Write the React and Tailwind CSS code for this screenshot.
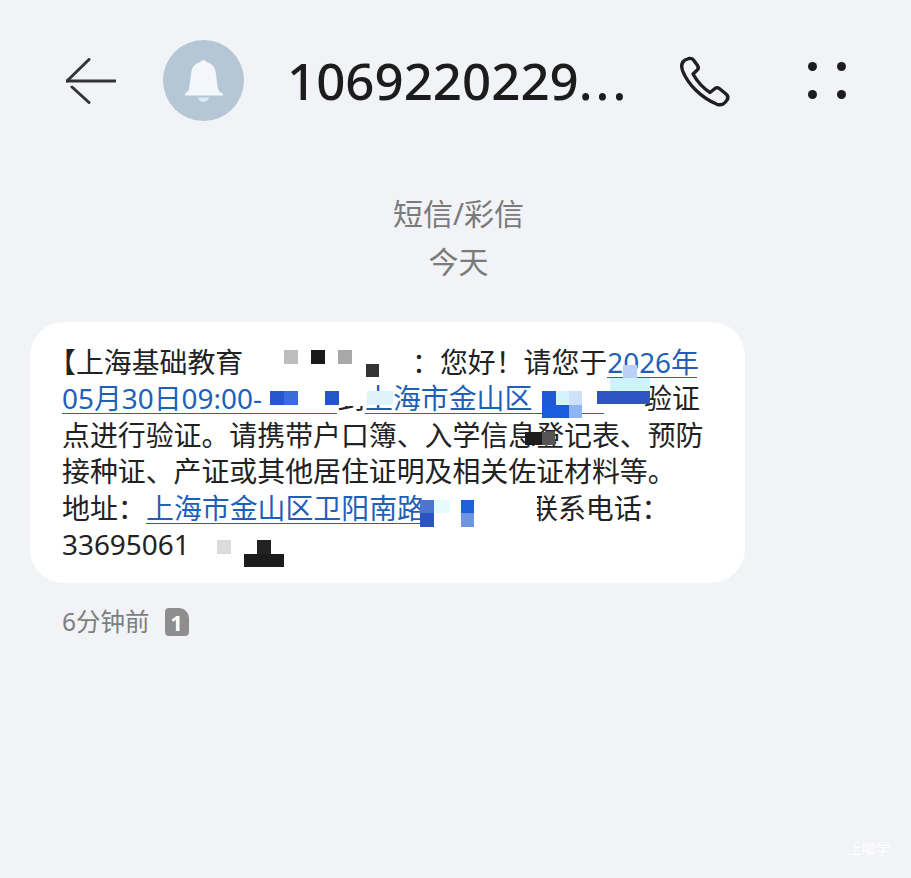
// mosaic squares over the censored parts of the message, placed relative to the bubble
const MOSAIC = [
    "left-[254px] top-[28px] w-[14px] h-[14px] bg-[#bdbdbd]",
    "left-[281px] top-[28px] w-[14px] h-[14px] bg-[#1a1a1a]",
    "left-[308px] top-[28px] w-[14px] h-[14px] bg-[#a8a8a8]",
    "left-[336px] top-[42px] w-[13px] h-[13px] bg-[#333333]",
    "left-[308px] top-[58px] w-[28px] h-[26px] bg-white",
    "left-[240px] top-[69px] w-[14px] h-[14px] bg-[#2757cf]",
    "left-[254px] top-[69px] w-[14px] h-[14px] bg-[#3a6cdb]",
    "left-[295px] top-[69px] w-[14px] h-[14px] bg-[#2456c8]",
    "left-[337px] top-[69px] w-[26px] h-[14px] bg-[#e0f3fb]",
    "left-[512px] top-[69px] w-[14px] h-[14px] bg-[#1f5ad6]",
    "left-[512px] top-[83px] w-[27px] h-[13px] bg-[#1a5ce0]",
    "left-[539px] top-[83px] w-[13px] h-[13px] bg-[#8fb4f5]",
    "left-[539px] top-[69px] w-[13px] h-[14px] bg-[#cfe0fa]",
    "left-[526px] top-[69px] w-[13px] h-[14px] bg-[#d5f3fb]",
    "left-[567px] top-[69px] w-[53px] h-[13px] bg-[#2f55c4]",
    "left-[580px] top-[56px] w-[40px] h-[13px] bg-[#cdf3fb]",
    "left-[593px] top-[43px] w-[14px] h-[13px] bg-[#bcd0f5]",
    "left-[495px] top-[110px] w-[17px] h-[13px] bg-[#1c1c1c]",
    "left-[512px] top-[110px] w-[13px] h-[13px] bg-[#555555]",
    "left-[390px] top-[191px] w-[14px] h-[14px] bg-[#2a55c0]",
    "left-[390px] top-[178px] w-[14px] h-[13px] bg-[#4f74cf]",
    "left-[431px] top-[178px] w-[13px] h-[13px] bg-[#1f5fd8]",
    "left-[431px] top-[191px] w-[13px] h-[14px] bg-[#6f94e0]",
    "left-[404px] top-[178px] w-[16px] h-[13px] bg-[#e6fbfe]",
    "left-[500px] top-[172px] w-[7px] h-[34px] bg-white",
    "left-[187px] top-[218px] w-[14px] h-[14px] bg-[#dcdcdc]",
    "left-[227px] top-[218px] w-[14px] h-[14px] bg-[#222222]",
    "left-[214px] top-[232px] w-[40px] h-[13px] bg-[#1c1c1c]",
];

function MessageLink({ className, children }) {
    return <span className={`inline-block h-[34px] border-b-[1.5px] border-[#2a62b4] text-[#1f5fb8] ${className}`}>{children}</span>;
}

function Line({ children }) {
    return <div className="flex h-[36.4px] items-start whitespace-nowrap leading-[36.4px]">{children}</div>;
}

export default function App() {
    return (
        <div className="relative h-[878px] w-[911px] overflow-hidden bg-[#f1f3f6] font-['Noto_Sans','Noto_Sans_CJK_SC',sans-serif] text-[#222222]">
            <header className="flex h-[121px] items-end pl-[66px] pt-[40px]">
                <div className="flex h-[81px] w-[97px] items-center">
                    <svg width="50" height="46" viewBox="0 0 50 46" fill="none" stroke="#333333" strokeWidth="3" strokeLinecap="round">
                        <path d="M1 23H49" />
                        <path d="M1 23L23 1.5" />
                        <path d="M6 29L23 44.5" />
                    </svg>
                </div>
                <div className="flex h-[81px] w-[81px] items-center justify-center rounded-full bg-[#b5c6d5]">
                    <svg width="40" height="44" viewBox="0 0 40 44">
                        <path d="M1 34.5C4 33 5 31 5.5 27L7.5 12C8.500 6.500 13 4 16.500 3C17.500 .5 21.500 .5 22.500 3C26 4 30.500 6.500 31.500 12L33.500 27C34 31 35 33 39 34.500V36.500H1Z" fill="#f3f7fb" />
                        <path d="M14 38.500H25C24 42 21.500 43 19.500 43C17.500 43 15 42 14 38.500Z" fill="#dfe8ef" />
                    </svg>
                </div>
                <div className="ml-[43px] flex h-[81px] w-[393px] items-center text-[51px] font-medium text-[#1c1c1c]">
                    1069220229<span className="tracking-[3px]">...</span>
                </div>
                <div className="flex h-[81px] w-[128px] items-center">
                    <svg width="50" height="50" viewBox="0 0 50 50" fill="none" stroke="#1f1f1f" strokeWidth="3.4" strokeLinejoin="round" className="overflow-visible">
                        <path d="M9 2.500C11 2 12.500 2.800 13.500 4L17.500 9.500C18.500 11 18.500 13 17 14.300L13 18C17 25 23 32 30 36.500L35 32.500C36.300 31.500 38 31.500 39.300 32.500L46 38C47.800 39.500 48.300 42 47 44L45 46.500C43 48.800 40 49.300 37 48.300C22 42 8 29 2.500 14.500C1 10 2 6 5 4Z" />
                    </svg>
                </div>
                <div className="grid h-[81px] w-[38px] grid-cols-2 content-center justify-between gap-y-[19px]">
                    <span className="h-[9px] w-[9px] rounded-full bg-[#1c1c1c]" />
                    <span className="h-[9px] w-[9px] justify-self-end rounded-full bg-[#1c1c1c]" />
                    <span className="h-[9px] w-[9px] rounded-full bg-[#1c1c1c]" />
                    <span className="h-[9px] w-[9px] justify-self-end rounded-full bg-[#1c1c1c]" />
                </div>
            </header>

            <div className="mt-[69px] flex flex-col items-center pl-[6px] text-[30px] leading-[48px] text-[#7a7a7a]">
                <div>短信/彩信</div>
                <div>今天</div>
            </div>

            <div className="relative ml-[30px] mt-[36px] h-[261px] w-[715px] rounded-[34px] bg-white pl-[32px] pt-[22px] text-[27.9px]">
                <Line>
                    <span className="-ml-[14px] w-[197px]">【上海基础教育</span>
                    <span className="ml-[167px]">：您好！请您于</span>
                    <MessageLink className="w-[90px]">2026年</MessageLink>
                </Line>
                <Line>
                    <MessageLink className="w-[275px]">05月30日09:00-</MessageLink>
                    <span className="w-[28px]">到</span>
                    <MessageLink className="w-[239px]">上海市金山区</MessageLink>
                    <span className="ml-[40px]">验证</span>
                </Line>
                <Line>点进行验证。请携带户口簿、入学信息登记表、预防</Line>
                <Line>接种证、产证或其他居住证明及相关佐证材料等。</Line>
                <Line>
                    <span className="w-[84px]">地址：</span>
                    <MessageLink className="w-[274px]">上海市金山区卫阳南路</MessageLink>
                    <span className="ml-[110px]">联系电话：</span>
                </Line>
                <Line>33695061</Line>
                {MOSAIC.map((tile) => (
                    <div key={tile} className={`absolute ${tile}`} />
                ))}
            </div>

            <div className="ml-[62px] mt-[22px] flex items-center gap-[15px] text-[24.5px] leading-[34px] text-[#7e7e7e]">
                <span>6分钟前</span>
                <span className="flex h-[28px] w-[24px] items-center justify-center rounded-[4px] rounded-tr-[10px] bg-[#8e8e8e] text-[22px] font-bold leading-none text-white">1</span>
            </div>

            <div className="absolute left-[848px] top-[839px] text-[14px] leading-[20px] text-white">上唧学</div>
        </div>
    );
}
